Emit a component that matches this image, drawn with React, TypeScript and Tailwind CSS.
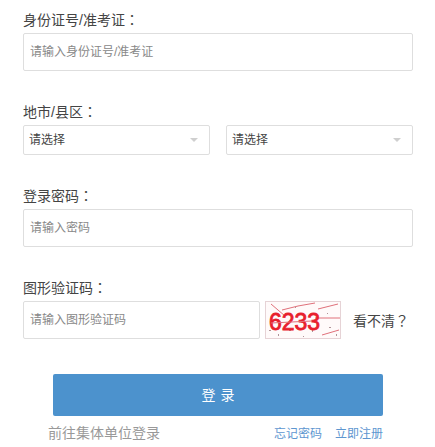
const FONT = "font-['Liberation_Sans','Noto_Sans_CJK_SC',sans-serif]"

function Captcha() {
  return (
    <svg width="76" height="38" viewBox="0 0 76 38" className="shrink-0">
      <rect x="0" y="0" width="76" height="38" fill="#fffafa" />
      <rect x="0.5" y="0.5" width="75" height="37" fill="none" stroke="#e6d3d6" strokeWidth="1" />
      <g stroke="#e0707a" strokeWidth="1" fill="none">
        <path d="M17 9 L33 5 L50 2" />
        <path d="M53 8 L73 3" />
        <path d="M6 3 L20 15" />
        <path d="M50 17 L75 17" />
        <path d="M57 34 L74 29" />
      </g>
      <g fill="#b09498">
        <rect x="4" y="29" width="2" height="1" />
        <rect x="13" y="33" width="1" height="2" />
        <rect x="24" y="29" width="2" height="1" />
        <rect x="38" y="35" width="1" height="1" />
        <rect x="47" y="29" width="1" height="2" />
        <rect x="64" y="26" width="2" height="1" />
        <rect x="71" y="33" width="1" height="2" />
        <rect x="30" y="6" width="1" height="1" />
        <rect x="62" y="12" width="1" height="1" />
      </g>
      <text x="4" y="29" fontSize="23" fill="#e8202c" stroke="#e8202c" strokeWidth="0.8" fontFamily="Liberation Sans, sans-serif">6233</text>
      <path d="M6 22 L47 20" stroke="#e0707a" strokeWidth="1" />
    </svg>
  )
}

function Caret() {
  return <span className="h-0 w-0 border-x-[4px] border-t-[4px] border-x-transparent border-t-[#cfcfcf]" />
}

function Select() {
  return (
    <div className="flex h-[30px] flex-1 items-center justify-between rounded-[2px] border border-[#dedede] bg-white pl-[5px] pr-[11px] text-xs text-[#444]">
      <span>请选择</span>
      <Caret />
    </div>
  )
}

function TextInput({ placeholder, className = '' }: { placeholder: string; className?: string }) {
  return (
    <input
      placeholder={placeholder}
      className={`h-[38px] rounded-[2px] border border-[#dedede] bg-white px-[6px] text-xs text-[#444] outline-none placeholder:text-[#888] ${className}`}
    />
  )
}

// the centred full-width punctuation only exists in the TC cut
function Punct({ children }: { children: string }) {
  return <span className="font-['Noto_Sans_CJK_TC',sans-serif]">{children}</span>
}

function Label({ children }: { children: string }) {
  return (
    <div className="mb-[5px] h-[19px] text-sm leading-[21px] text-[#444]">
      {children}
      <Punct>：</Punct>
    </div>
  )
}

export default function App() {
  return (
    <div className={`h-[447px] w-[435px] overflow-hidden bg-white px-[23px] pt-[9px] ${FONT}`}>
      <Label>身份证号/准考证</Label>
      <TextInput placeholder="请输入身份证号/准考证" className="w-[390px]" />

      <div className="mt-[30px]">
        <Label>地市/县区</Label>
        <div className="flex w-[390px] gap-4">
          <Select />
          <Select />
        </div>
      </div>

      <div className="mt-[30px]">
        <Label>登录密码</Label>
        <TextInput placeholder="请输入密码" className="w-[390px]" />
      </div>

      <div className="mt-[30px]">
        <Label>图形验证码</Label>
        <div className="flex items-center">
          <TextInput placeholder="请输入图形验证码" className="w-[237px]" />
          <div className="ml-[5px]">
            <Captcha />
          </div>
          <span className="ml-3 text-sm text-[#444]">
            看不清
            <Punct>？</Punct>
          </span>
        </div>
      </div>

      <button className="ml-[30px] mt-[35px] block h-[42px] w-[330px] rounded-[2px] bg-[#4c92cd] pl-[5px] text-sm tracking-[5px] text-white">
        登录
      </button>

      <div className="ml-[25px] mt-[8px] flex w-[335px] items-center justify-between">
        <span className="text-sm leading-[19px] text-[#999]">前往集体单位登录</span>
        <div className="flex gap-[13px] text-xs text-[#5d96d0]">
          <span>忘记密码</span>
          <span>立即注册</span>
        </div>
      </div>
    </div>
  )
}
